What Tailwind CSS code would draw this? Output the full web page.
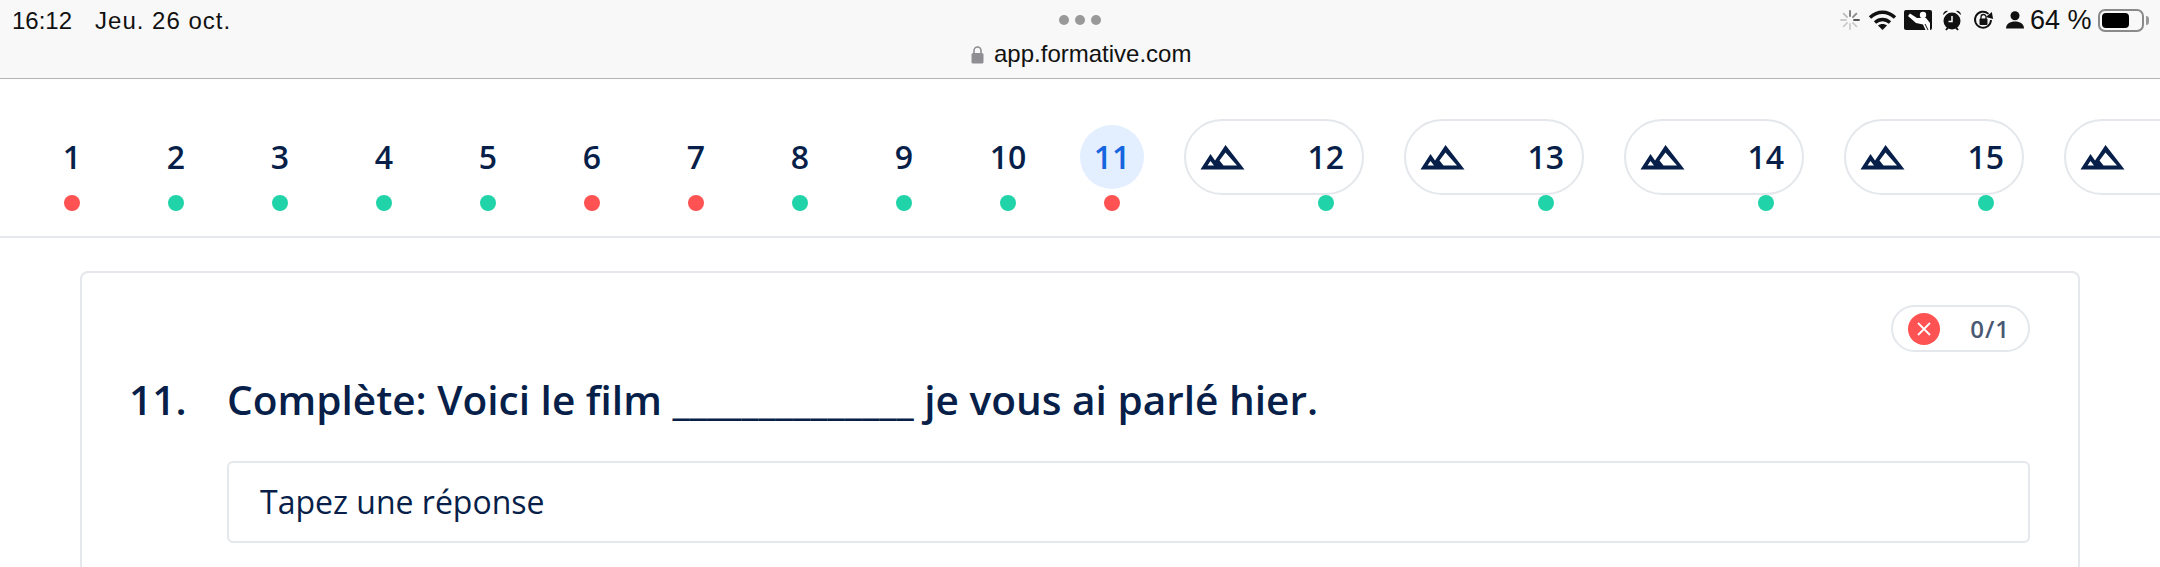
<!DOCTYPE html>
<html><head><meta charset="utf-8"><script src="https://cdn.jsdelivr.net/npm/@tailwindcss/browser@4"></script></head>
<body class="bg-white overflow-hidden h-[567px] font-['Open_Sans',sans-serif] text-[#071f49]">
<header class="relative h-[79px] bg-[#f8f8f8] border-b border-[#b4b4b4] font-['Liberation_Sans',sans-serif] text-[#111] overflow-hidden">
  <div class="absolute left-[12px] top-[7px] text-[24px] leading-[28px] flex gap-[23px]"><span>16:12</span><span class="tracking-[1px]">Jeu. 26 oct.</span></div>
  <div class="absolute left-[1059px] top-[15px] flex gap-[6px]"><i class="w-[10px] h-[10px] rounded-full bg-[#999]"></i><i class="w-[10px] h-[10px] rounded-full bg-[#999]"></i><i class="w-[10px] h-[10px] rounded-full bg-[#999]"></i></div>
  <div class="absolute left-[971px] top-[40px] flex items-center gap-[10px] text-[24px] leading-[28px]">
    <svg width="13" height="19" viewBox="0 0 13 19"><path d="M3 9V5.500a3.500 3.500 0 0 1 7 0V9" fill="none" stroke="#8e8e93" stroke-width="1.600"/><rect x="0.500" y="8" width="12" height="10.500" rx="1.600" fill="#8e8e93"/></svg>
    <span>app.formative.com</span>
  </div>
  <div class="absolute right-0 top-0 h-[40px] w-[340px]">
    <svg class="absolute left-[20px] top-[10px]" width="20" height="20" viewBox="0 0 20 20" stroke-width="1.800" stroke-linecap="round"><path d="M10 1v5" stroke="#777"/><path d="M16.400 3.600l-3.500 3.500" stroke="#888"/><path d="M19 10h-5" stroke="#555"/><path d="M16.400 16.400l-3.500-3.500" stroke="#ccc"/><path d="M10 19v-5" stroke="#ccc"/><path d="M3.600 16.400l3.500-3.500" stroke="#ccc"/><path d="M1 10h5" stroke="#ccc"/><path d="M3.600 3.600l3.500 3.500" stroke="#bbb"/></svg>
    <svg class="absolute left-[48px] top-[9px]" width="29" height="22" viewBox="0 0 29 22" fill="none" stroke="#111" stroke-width="3.400"><path d="M2 8.500C9.500 1.500 19.500 1.500 27 8.500"/><path d="M7 13.500c4.500-4 10.500-4 15 0"/><path d="M14.500 21l-4.500-4.500c2.500-2 6.500-2 9 0z" fill="#111" stroke="none"/></svg>
    <svg class="absolute left-[84px] top-[10px]" width="28" height="20" viewBox="0 0 28 20"><rect width="28" height="20" rx="2" fill="#111"/><path fill="#fff" d="M4 6L6 3.500 13 8H22L26 13V20H21.500L19 14.500 12 13Z"/><circle cx="19" cy="5" r="3.200" fill="#fff"/><path d="M24 20L21 14" stroke="#111" stroke-width="1"/></svg>
    <svg class="absolute left-[122px] top-[9px]" width="20" height="22" viewBox="0 0 20 22"><circle cx="10" cy="12" r="8.500" fill="#111"/><path d="M1 6a4 4 0 0 1 5-4zM19 6a4 4 0 0 0-5-4z" fill="#111"/><path d="M10 7v5.500h-3.500" fill="none" stroke="#fff" stroke-width="1.500"/><path d="M4 21l2-2.500M16 21l-2-2.500" stroke="#111" stroke-width="2"/></svg>
    <svg class="absolute left-[153px] top-[9px]" width="22" height="21" viewBox="0 0 22 21"><path d="M18 11a8 8 0 1 1-2.500-6.100" fill="none" stroke="#111" stroke-width="1.900"/><path d="M13.500 9H21L18 2.500z" fill="#111" transform="rotate(15 17 6)"/><rect x="6.500" y="9.500" width="8" height="6.500" rx="1" fill="#111"/><path d="M8 10V8a2.500 2.500 0 0 1 5 0v2" fill="none" stroke="#111" stroke-width="1.300"/></svg>
    <svg class="absolute left-[186px] top-[11px]" width="18" height="18" viewBox="0 0 18 18"><circle cx="9" cy="4.800" r="4.500" fill="#111"/><path d="M0 17.500c0-4.500 4-7 9-7s9 2.500 9 7z" fill="#111"/></svg>
    <span class="absolute left-[210px] top-[5px] text-[27px] leading-[30px] whitespace-nowrap">64 %</span>
    <div class="absolute left-[278px] top-[9px] w-[46px] h-[23px] rounded-[7px] border-2 border-[#8a8a8a] p-[2px]"><div class="h-full w-[27px] rounded-[4px] bg-black"></div></div>
    <div class="absolute left-[326px] top-[16px] w-[3px] h-[9px] rounded-r-full bg-[#999]"></div>
  </div>
</header>

<nav class="h-[159px] border-b-2 border-[#e4e7eb] pt-[40px] pl-[20px] flex overflow-hidden">
  <div class="w-[104px] shrink-0 flex flex-col items-center"><div class="h-[76px] flex items-center text-[32px] font-semibold">1</div><i class="w-4 h-4 rounded-full bg-[#ff5252]"></i></div>
  <div class="w-[104px] shrink-0 flex flex-col items-center"><div class="h-[76px] flex items-center text-[32px] font-semibold">2</div><i class="w-4 h-4 rounded-full bg-[#20d3a8]"></i></div>
  <div class="w-[104px] shrink-0 flex flex-col items-center"><div class="h-[76px] flex items-center text-[32px] font-semibold">3</div><i class="w-4 h-4 rounded-full bg-[#20d3a8]"></i></div>
  <div class="w-[104px] shrink-0 flex flex-col items-center"><div class="h-[76px] flex items-center text-[32px] font-semibold">4</div><i class="w-4 h-4 rounded-full bg-[#20d3a8]"></i></div>
  <div class="w-[104px] shrink-0 flex flex-col items-center"><div class="h-[76px] flex items-center text-[32px] font-semibold">5</div><i class="w-4 h-4 rounded-full bg-[#20d3a8]"></i></div>
  <div class="w-[104px] shrink-0 flex flex-col items-center"><div class="h-[76px] flex items-center text-[32px] font-semibold">6</div><i class="w-4 h-4 rounded-full bg-[#ff5252]"></i></div>
  <div class="w-[104px] shrink-0 flex flex-col items-center"><div class="h-[76px] flex items-center text-[32px] font-semibold">7</div><i class="w-4 h-4 rounded-full bg-[#ff5252]"></i></div>
  <div class="w-[104px] shrink-0 flex flex-col items-center"><div class="h-[76px] flex items-center text-[32px] font-semibold">8</div><i class="w-4 h-4 rounded-full bg-[#20d3a8]"></i></div>
  <div class="w-[104px] shrink-0 flex flex-col items-center"><div class="h-[76px] flex items-center text-[32px] font-semibold">9</div><i class="w-4 h-4 rounded-full bg-[#20d3a8]"></i></div>
  <div class="w-[104px] shrink-0 flex flex-col items-center"><div class="h-[76px] flex items-center text-[32px] font-semibold">10</div><i class="w-4 h-4 rounded-full bg-[#20d3a8]"></i></div>
  <div class="w-[104px] shrink-0 flex flex-col items-center"><div class="h-[76px] flex items-center"><div class="w-[64px] h-[64px] rounded-full bg-[#e3eefe] flex items-center justify-center text-[32px] font-semibold text-[#1565e0]">11</div></div><i class="w-4 h-4 rounded-full bg-[#ff5252]"></i></div>

  <div class="w-[180px] ml-[20px] shrink-0 flex flex-col items-end"><div class="w-full h-[76px] rounded-[38px] border-2 border-[#e4e7eb] flex items-center justify-between pl-[14px] pr-[18px] text-[32px] font-semibold"><svg width="45" height="25" viewBox="0 0 45 25"><path fill="#071f49" fill-rule="evenodd" d="M25.500 0L44.500 24.500H0.500L10.500 9 15 15.500 18.500 10.500ZM25.500 7.500L19.500 15.500 23.500 20.500H37ZM10.500 16L7.500 20.500H14Z"/></svg><span>12</span></div><i class="w-4 h-4 rounded-full bg-[#20d3a8] mr-[30px]"></i></div>
  <div class="w-[180px] ml-[40px] shrink-0 flex flex-col items-end"><div class="w-full h-[76px] rounded-[38px] border-2 border-[#e4e7eb] flex items-center justify-between pl-[14px] pr-[18px] text-[32px] font-semibold"><svg width="45" height="25" viewBox="0 0 45 25"><path fill="#071f49" fill-rule="evenodd" d="M25.500 0L44.500 24.500H0.500L10.500 9 15 15.500 18.500 10.500ZM25.500 7.500L19.500 15.500 23.500 20.500H37ZM10.500 16L7.500 20.500H14Z"/></svg><span>13</span></div><i class="w-4 h-4 rounded-full bg-[#20d3a8] mr-[30px]"></i></div>
  <div class="w-[180px] ml-[40px] shrink-0 flex flex-col items-end"><div class="w-full h-[76px] rounded-[38px] border-2 border-[#e4e7eb] flex items-center justify-between pl-[14px] pr-[18px] text-[32px] font-semibold"><svg width="45" height="25" viewBox="0 0 45 25"><path fill="#071f49" fill-rule="evenodd" d="M25.500 0L44.500 24.500H0.500L10.500 9 15 15.500 18.500 10.500ZM25.500 7.500L19.500 15.500 23.500 20.500H37ZM10.500 16L7.500 20.500H14Z"/></svg><span>14</span></div><i class="w-4 h-4 rounded-full bg-[#20d3a8] mr-[30px]"></i></div>
  <div class="w-[180px] ml-[40px] shrink-0 flex flex-col items-end"><div class="w-full h-[76px] rounded-[38px] border-2 border-[#e4e7eb] flex items-center justify-between pl-[14px] pr-[18px] text-[32px] font-semibold"><svg width="45" height="25" viewBox="0 0 45 25"><path fill="#071f49" fill-rule="evenodd" d="M25.500 0L44.500 24.500H0.500L10.500 9 15 15.500 18.500 10.500ZM25.500 7.500L19.500 15.500 23.500 20.500H37ZM10.500 16L7.500 20.500H14Z"/></svg><span>15</span></div><i class="w-4 h-4 rounded-full bg-[#20d3a8] mr-[30px]"></i></div>
  <div class="w-[180px] ml-[40px] shrink-0 flex flex-col items-end"><div class="w-full h-[76px] rounded-[38px] border-2 border-[#e4e7eb] flex items-center pl-[14px] pr-[18px]"><svg width="45" height="25" viewBox="0 0 45 25"><path fill="#071f49" fill-rule="evenodd" d="M25.500 0L44.500 24.500H0.500L10.500 9 15 15.500 18.500 10.500ZM25.500 7.500L19.500 15.500 23.500 20.500H37ZM10.500 16L7.500 20.500H14Z"/></svg></div></div>
</nav>

<main class="ml-[80px] w-[2000px] mt-[33px] h-[400px] border-2 border-[#e4e7eb] rounded-[8px] pt-[32px] pr-[48px] pl-[47px]">
  <div class="flex justify-end">
    <div class="w-[139px] h-[47px] rounded-full border-2 border-[#e4e7eb] flex items-center pl-[15px] pr-[18px] justify-between">
      <span class="w-[32px] h-[32px] rounded-full bg-[#ff5252] flex items-center justify-center"><svg width="14" height="14" viewBox="0 0 14 14" stroke="#fff" stroke-width="1.800"><path d="M1 1l12 12M13 1L1 13"/></svg></span>
      <span class="text-[24px] font-semibold text-[#4a5873] tracking-[1px]">0/1</span>
    </div>
  </div>
  <div class="flex mt-[20px] text-[40.6px] leading-[56px] font-semibold">
    <div class="w-[98px] shrink-0">11.</div>
    <div>Complète: Voici le film ______________ je vous ai parlé hier.</div>
  </div>
  <div class="ml-[98px] mt-[33px] h-[82px] rounded-[6px] border-2 border-[#e4e7eb] flex items-center pl-[31px] text-[32px]">Tapez une réponse</div>
</main>
</body></html>
